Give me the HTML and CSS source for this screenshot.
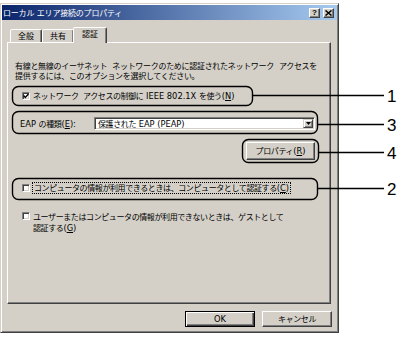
FILE: index.html
```html
<!DOCTYPE html>
<html lang="ja">
<head>
<meta charset="utf-8">
<link rel="stylesheet" href="styles.css">
</head>
<body>
<div class="stage">
  <div class="window">
    <div class="titlebar">
      <span class="title">ローカル エリア接続のプロパティ</span>
      <div class="tbtns">
        <span class="tbtn help">?</span>
        <span class="tbtn close"><svg width="7" height="6" viewBox="0 0 7 6"><path d="M0.5 0.5 L6.5 5.5 M6.5 0.5 L0.5 5.5" stroke="#000" stroke-width="1.5"/></svg></span>
      </div>
    </div>
    <div class="body">
      <div class="tabs">
        <div class="tab">全般</div>
        <div class="tab">共有</div>
        <div class="tab active">認証</div>
      </div>
      <div class="panel">
        <p class="desc">有線と無線のイーサネット ネットワークのために認証されたネットワーク アクセスを<br>提供するには、このオプションを選択してください。</p>
        <div class="check first">
          <span class="box"><svg width="6" height="6" viewBox="0 0 6 6"><path d="M0.6 2.6 L2.3 4.4 L5.5 1" fill="none" stroke="#000" stroke-width="1.4"/></svg></span>
          <span class="lbl">ネットワーク アクセスの制御に<span class="en"> IEEE 802.1X </span>を使う<span class="en">(<u>N</u>)</span></span>
        </div>
        <div class="eap">
          <span class="lbl"><span class="en">EAP </span>の種類<span class="en">(<u>E</u>):</span></span>
          <div class="select">
            <span>保護された<span class="en"> EAP (PEAP)</span></span>
            <span class="arrow"><svg width="5" height="3" viewBox="0 0 5 3"><path d="M0 0 H5 L2.5 3 Z" fill="#000"/></svg></span>
          </div>
        </div>
        <div class="proprow">
          <span class="btn prop">プロパティ<span class="en">(<u>R</u>)</span></span>
        </div>
        <div class="check second">
          <span class="box"></span>
          <span class="lbl focus">コンピュータの情報が利用できるときは、コンピュータとして認証する<span class="en">(<u>C</u>)</span></span>
        </div>
        <div class="check third">
          <span class="box"></span>
          <span class="lbl">ユーザーまたはコンピュータの情報が利用できないときは、ゲストとして<br>認証する<span class="en">(<u>G</u>)</span></span>
        </div>
      </div>
      <div class="footer">
        <span class="btn default"><span class="en">OK</span></span>
        <span class="btn">キャンセル</span>
      </div>
    </div>
  </div>
  <svg class="callouts" width="400" height="340" viewBox="0 0 400 340">
    <g fill="none" stroke="#000" stroke-width="1.4">
      <rect x="12.5" y="86.5" width="240" height="19" rx="6"/>
      <line x1="252.5" y1="95.5" x2="384" y2="95.5"/>
      <rect x="12.5" y="111.5" width="305" height="22" rx="6"/>
      <line x1="317.5" y1="124.5" x2="384" y2="124.5"/>
      <rect x="242.5" y="139.5" width="76" height="23" rx="6"/>
      <line x1="318.5" y1="152.5" x2="384" y2="152.5"/>
      <rect x="12.5" y="178.5" width="305" height="21" rx="6"/>
      <line x1="317.5" y1="188.5" x2="384" y2="188.5"/>
    </g>
    <g class="nums">
      <text x="387" y="101.5">1</text>
      <text x="387" y="130.5">3</text>
      <text x="387" y="159">4</text>
      <text x="387" y="194.5">2</text>
    </g>
  </svg>
</div>
</body>
</html>
```
FILE: styles.css
```css
* { box-sizing: border-box; }
html, body { margin: 0; padding: 0; background: #fff; }
body {
  font-family: "Noto Sans CJK JP", "Liberation Sans", sans-serif;
  font-size: 8px;
  letter-spacing: -0.4px;
  word-spacing: 3px;
  color: #000;
}
.en {
  font-family: "DejaVu Sans", sans-serif;
  font-size: 8.3px;
  letter-spacing: 0;
  word-spacing: 0;
}
u { text-decoration: underline; text-underline-offset: 1px; }

.stage { position: relative; width: 400px; height: 340px; overflow: hidden; }

.window {
  margin-top: 3px;
  width: 339px;
  height: 330px;
  background: #d4d0c8;
  border: 1px solid;
  border-color: #d4d0c8 #404040 #404040 #d4d0c8;
  box-shadow: inset 1px 1px #fff, inset -1px -1px #808080;
  display: flex;
  flex-direction: column;
}

.titlebar {
  margin: 1px 1px 0;
  height: 15px;
  background: linear-gradient(90deg, #0a246a, #a6caf0);
  display: flex;
  align-items: center;
  justify-content: space-between;
  padding: 0 3px 0 1px;
}
.title { color: #fff; line-height: 15px; white-space: nowrap; letter-spacing: -0.2px; word-spacing: 1px; }
.tbtns { display: flex; gap: 3px; }
.tbtn {
  width: 11px;
  height: 10px;
  background: #d4d0c8;
  border: 1px solid;
  border-color: #fff #404040 #404040 #fff;
  box-shadow: inset -1px -1px #808080;
  display: flex;
  align-items: center;
  justify-content: center;
  font: bold 8px/1 "Liberation Sans", sans-serif;
  letter-spacing: 0;
}

.body { padding: 7px 7px 0 6px; display: flex; flex-direction: column; }

.tabs {
  display: flex;
  align-items: flex-end;
  height: 15px;
  padding-left: 3px;
  position: relative;
  z-index: 1;
}
.tab {
  height: 13px;
  padding: 0 7px;
  border: 1px solid;
  border-bottom: none;
  border-color: #fff #404040 transparent #fff;
  box-shadow: inset -1px 0 #808080;
  border-radius: 2px 2px 0 0;
  line-height: 11px;
  background: #d4d0c8;
  white-space: nowrap;
  letter-spacing: 0;
}
.tab.active {
  height: 16px;
  margin: 0 -1px -1px -1px;
  padding: 0 8px;
  line-height: 12px;
}

.panel {
  height: 262px;
  border: 1px solid;
  border-color: #fff #404040 #404040 #fff;
  box-shadow: inset -1px -1px #808080;
  padding: 18px 15px 0 7px;
}

.desc { margin: 0; line-height: 10px; white-space: nowrap; letter-spacing: -0.3px; word-spacing: 3.5px; }

.check { display: flex; align-items: center; gap: 3px; margin-left: 7px; line-height: 10px; white-space: nowrap; }
.check.first { margin-top: 10px; }
.check.second { margin-top: 23px; }
.check.third { margin-top: 18px; align-items: flex-start; }
.check.third .box { margin-top: 1px; }
.check.third .lbl { line-height: 11px; }

.box {
  width: 8px;
  height: 8px;
  flex: none;
  background: #fff;
  border: 1px solid;
  border-color: #808080 #fff #fff #808080;
  box-shadow: inset 1px 1px #404040, inset -1px -1px #d4d0c8;
  display: flex;
  align-items: center;
  justify-content: center;
}
.box svg { display: block; }

.focus { outline: 1px dotted #000; outline-offset: 0; padding: 0 1px; }

.eap { display: flex; align-items: center; margin-top: 16px; margin-left: 5px; white-space: nowrap; }
.select {
  margin-left: auto;
  width: 221px;
  height: 13px;
  background: #fff;
  border: 1px solid;
  border-color: #808080 #fff #fff #808080;
  box-shadow: inset 1px 1px #404040, inset -1px -1px #d4d0c8;
  display: flex;
  align-items: center;
  padding: 0 1px 0 3px;
  line-height: 10px;
}
.arrow {
  margin-left: auto;
  width: 10px;
  height: 9px;
  background: #d4d0c8;
  border: 1px solid;
  border-color: #d4d0c8 #404040 #404040 #d4d0c8;
  box-shadow: inset 1px 1px #fff, inset -1px -1px #808080;
  display: flex;
  align-items: center;
  justify-content: center;
}
.arrow svg { display: block; }

.proprow { display: flex; justify-content: flex-end; margin-top: 12px; }

.btn {
  display: flex;
  align-items: center;
  justify-content: center;
  height: 16px;
  width: 70px;
  background: #d4d0c8;
  border: 1px solid;
  border-color: #fff #404040 #404040 #fff;
  box-shadow: inset -1px -1px #808080;
  line-height: 10px;
  white-space: nowrap;
}
.btn.prop { width: 69px; height: 18px; }
.btn.default {
  border-color: #000;
  box-shadow: inset 1px 1px #fff, inset -1px -1px #404040, inset -2px -2px #808080;
}

.footer { display: flex; justify-content: flex-end; gap: 7px; margin-top: 7px; margin-right: -1px; }

.callouts { position: absolute; left: 0; top: 0; pointer-events: none; }
.nums text { font-family: "Liberation Sans", sans-serif; font-size: 17px; fill: #000; letter-spacing: 0; word-spacing: 0; }
```
